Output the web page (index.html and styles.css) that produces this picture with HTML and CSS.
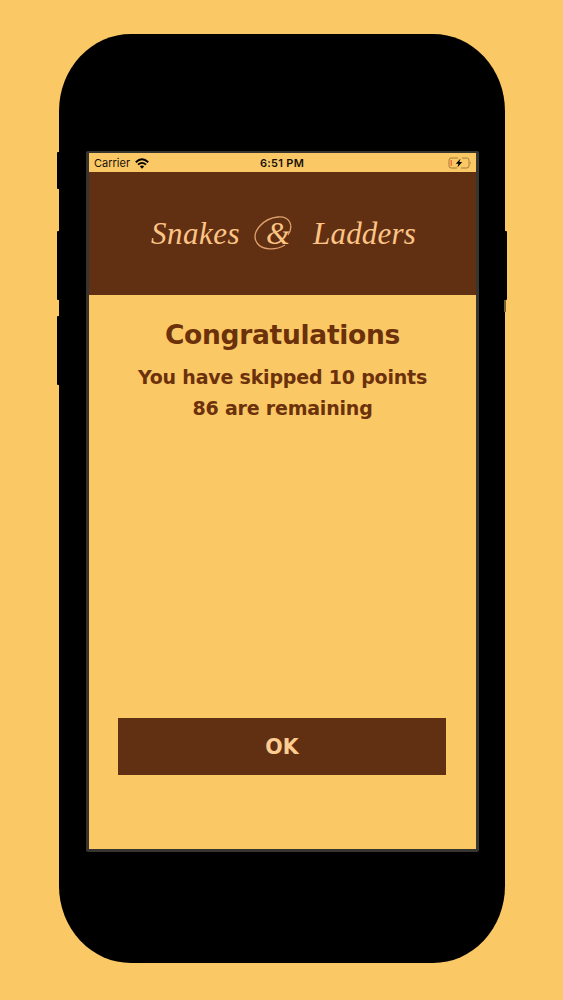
FILE: index.html
```html
<!DOCTYPE html>
<html lang="en">
<head>
    <meta charset="UTF-8">
    <meta name="viewport" content="width=device-width, initial-scale=1.0">
    <title>Snakes &amp; Ladders</title>
    <link rel="stylesheet" href="styles.css">
</head>
<body>
    <div class="phone">
        <span class="side-button mute"></span>
        <span class="side-button volume-up"></span>
        <span class="side-button volume-down"></span>
        <span class="side-button power"></span>
        <span class="power-edge"></span>

        <div class="screen">
            <div class="status-bar">
                <div class="carrier">
                    <span>Carrier</span>
                    <svg class="wifi" viewBox="0 0 14 11" width="14" height="11">
                        <path d="M0.8 4.2 Q7 -1.6 13.2 4.2" fill="none" stroke="#000" stroke-width="1.9"/>
                        <path d="M3 6.7 Q7 3.1 11 6.7" fill="none" stroke="#000" stroke-width="1.8"/>
                        <path d="M4.9 8.4 Q7 6.7 9.1 8.4 L7 10.7 Z"/>
                    </svg>
                </div>
                <div class="time">6:51 PM</div>
                <svg class="battery" viewBox="0 0 24 12" width="24" height="12">
                    <path d="M10 1 H3.2 Q1 1 1 3.2 V8.8 Q1 11 3.2 11 H9 M14 1 H18.8 Q21 1 21 3.2 V8.8 Q21 11 18.8 11 H13" fill="none" stroke="#a57c38" stroke-width="1"/>
                    <path d="M22 4.3 Q23.4 6 22 7.7 Z" fill="#a57c38"/>
                    <rect x="2.6" y="3" width="1.2" height="6" fill="#f4552f"/>
                    <path d="M12.5 1.6 L7.8 6.8 H10.5 L9.4 10.4 L14.2 5.1 H11.4 Z"/>
                </svg>
            </div>

            <div class="header">
                <h1 class="title">
                    <span class="word-snakes">Snakes</span>
                    <span class="ampersand">&amp;
                        <svg class="flourish" viewBox="0 0 46 40" width="46" height="40">
                            <path d="M32 35 C22 41 9 40 4 33 C-3 22 11 8 25 7 C37 6 41 16 35 25"/>
                        </svg>
                    </span>
                    <span class="word-ladders">Ladders</span>
                </h1>
            </div>

            <div class="content">
                <h2>Congratulations</h2>
                <p>You have skipped 10 points</p>
                <p>86 are remaining</p>
                <button class="ok-button">OK</button>
            </div>
        </div>
    </div>
</body>
</html>
```
FILE: styles.css
```css
* {
    margin: 0;
    padding: 0;
    box-sizing: border-box;
}

body {
    height: 1000px;
    padding: 34px 0 0 59px;
    background-color: #fbc866;
    font-family: "DejaVu Sans", sans-serif;
    overflow: hidden;
}

/* Phone */
.phone {
    position: relative;
    width: 446px;
    height: 929px;
    padding: 117px 0 0 27px;
    background-color: #000;
    border-radius: 72px / 77px;
}

.side-button {
    position: absolute;
    left: -2px;
    width: 4px;
    height: 69px;
    background-color: #000;
    border-radius: 1px;
}

.mute {
    top: 118px;
    height: 37px;
}

.volume-up {
    top: 197px;
}

.volume-down {
    top: 282px;
}

.power {
    top: 197px;
    left: 444px;
}

.power-edge {
    position: absolute;
    top: 266px;
    left: 445px;
    width: 2px;
    height: 12px;
    background-color: #75602f;
}

.screen {
    display: flex;
    flex-direction: column;
    width: 393px;
    height: 701px;
    border: 3px solid #373530;
    border-top-width: 2px;
    border-radius: 2px;
    background-color: #fbc866;
}

/* Status bar */
.status-bar {
    display: grid;
    grid-template-columns: 1fr auto 1fr;
    align-items: center;
    height: 19px;
    padding: 1px 4px 0 5px;
    font-family: Inter, sans-serif;
    font-size: 11px;
    color: #17100a;
}

.carrier {
    display: flex;
    align-items: center;
    gap: 5px;
}

.time {
    margin-right: 2px;
    font-weight: 600;
    letter-spacing: 0.3px;
}

.battery {
    justify-self: end;
}

/* Title */
.header {
    height: 123px;
    padding-top: 37px;
    background-color: #613013;
}

.title {
    display: flex;
    align-items: baseline;
    height: 50px;
    padding-left: 62px;
    font-family: "Liberation Serif", serif;
    font-size: 31px;
    font-style: italic;
    font-weight: normal;
    line-height: 50px;
    color: #fdc485;
}

.word-snakes {
    width: 102px;
    letter-spacing: 0.5px;
}

.ampersand {
    position: relative;
    width: 60px;
    padding-left: 13px;
}

/* Swash curling round the ampersand */
.flourish {
    position: absolute;
    left: 0;
    top: 1px;
    fill: none;
    stroke: #dfa16b;
    stroke-width: 1.3;
}

.word-ladders {
    letter-spacing: 0.2px;
}

/* Message */
.content {
    display: flex;
    flex: 1;
    flex-direction: column;
    align-items: center;
    color: #6b310b;
    text-align: center;
}

.content h2 {
    margin: 20px 0 7px;
    font-size: 26.5px;
    letter-spacing: -0.3px;
    line-height: 40px;
}

.content p {
    font-size: 19px;
    font-weight: bold;
    letter-spacing: -0.2px;
    line-height: 31px;
}

.ok-button {
    width: 328px;
    height: 57px;
    margin-top: auto;
    margin-right: 1px;
    margin-bottom: 74px;
    border: none;
    background-color: #613013;
    font-family: "DejaVu Sans", sans-serif;
    font-size: 20.5px;
    font-weight: bold;
    color: #fdcc91;
    cursor: pointer;
}
```
